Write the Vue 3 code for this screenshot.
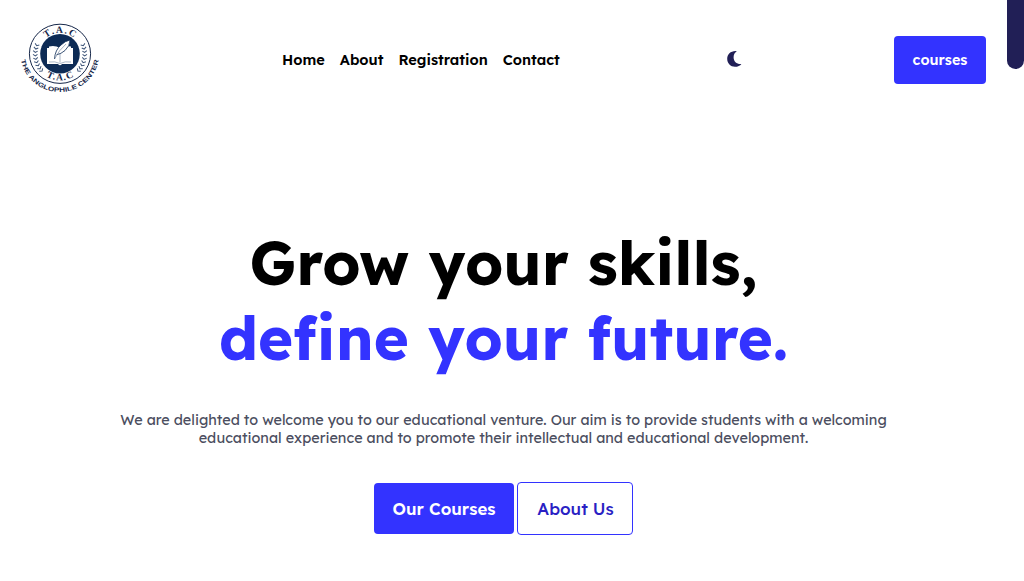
<script setup>
const links = ['Home', 'About', 'Registration', 'Contact']
const leaves = [-20, -12, -4, 4, 12, 20, 28, 36, 43]
</script>

<template>
  <div class="page">
    <header class="bar">
      <svg class="logo" viewBox="0 0 84 84" width="84" height="84">
        <defs>
          <path id="ring-text" d="M2.7 40 A39.2 38 0 0 0 81.1 40" />
          <path id="top-text" d="M20.8 40 A21.2 21.2 0 0 1 63.2 40" />
          <path id="low-text" d="M15 39.4 A27 27 0 0 0 69 39.4" />
        </defs>
        <ellipse cx="42" cy="39.8" rx="30.6" ry="29.6" fill="#fff" stroke="#17284a" stroke-width="1" />
        <circle cx="42" cy="39.8" r="19.8" fill="#0d2b55" />
        <text class="tac"><textPath href="#top-text" startOffset="50%" text-anchor="middle" textLength="30">T.A.C</textPath></text>
        <text class="tac"><textPath href="#low-text" startOffset="50%" text-anchor="middle" textLength="29">T.A.C</textPath></text>
        <g fill="none" stroke="#3d5478" stroke-width="1">
          <path v-for="a in leaves" :key="'l' + a" :transform="`rotate(${-a} 42 40)`" d="M15 38.5 l2.3 1.7 l2.2 -1.5" />
          <path v-for="a in leaves" :key="'r' + a" :transform="`rotate(${a} 42 40)`" d="M69 38.5 l-2.3 1.7 l-2.2 -1.5" />
        </g>
        <path d="M29 34 H31 V32.5 Q37 31 42 34 Q47 31 53 32.5 V34 H55 V50 H44 Q42 52.5 40 50 H29 Z" fill="#fff" />
        <path d="M42 35 V48.5 M31 48 Q37 47 42 49.5 Q47 47 53 48" fill="none" stroke="#7185a0" stroke-width=".6" />
        <path d="M36.5 45 Q37 36 43 31 Q47 27 52 26 Q52 32 47 36.5 Q43 40 38.5 40.8" fill="#fff" stroke="#0d2b55" stroke-width=".8" />
        <path d="M36.5 45 Q41 36 48 30" fill="none" stroke="#4a6080" stroke-width=".5" />
        <text class="name"><textPath href="#ring-text" startOffset="50%" text-anchor="middle" textLength="109" lengthAdjust="spacingAndGlyphs">THE ANGLOPHILE CENTER</textPath></text>
      </svg>
      <nav class="nav">
        <a v-for="l in links" :key="l">{{ l }}</a>
      </nav>
      <svg class="moon" viewBox="0 0 16 18" width="16" height="18">
        <path d="M9.5 .9 C4.4 .9 1.2 4.5 1.2 8.8 C1.2 13.3 4.6 16.8 9 16.8 C11.7 16.8 14.2 15.9 15.4 14 C10.8 14.4 7.6 11.6 7.6 7.2 C7.6 4.8 8.6 2.6 10.8 1.2 Z" fill="#211f56" />
      </svg>
      <button class="btn small">courses</button>
    </header>

    <main class="hero">
      <h1>Grow your skills,<br><span class="blue">define your future.</span></h1>
      <p>We are delighted to welcome you to our educational venture. Our aim is to provide students with a welcoming<br>educational experience and to promote their intellectual and educational development.</p>
      <div class="actions">
        <button class="btn large">Our Courses</button>
        <button class="btn outline">About Us</button>
      </div>
    </main>
    <div class="thumb"></div>
  </div>
</template>

<style>
html, body { overflow: hidden; background: #fff; }
</style>
<style scoped>
.page {
  position: relative;
  width: 1024px;
  height: 581px;
  padding-right: 17px;
  box-sizing: border-box;
  overflow: hidden;
  background: #fff;
  font-family: Lexend, Inter, sans-serif;
}
.bar { display: flex; align-items: center; height: 120px; padding: 0 21px 0 18px; }
.logo { margin-top: -8px; flex: none; }
.tac { font: bold 9.6px "Liberation Serif", serif; fill: #17284a; }
.name { font: bold 6.3px "Liberation Sans", sans-serif; fill: #17284a; }
.nav { display: flex; gap: 15px; width: 279px; margin-left: 180px; margin-top: -2px; font-size: 14.56px; font-weight: 600; color: #000; white-space: nowrap; }
.moon { margin-left: 165px; margin-top: -2px; flex: none; }
.btn { border: 0; border-radius: 4px; background: #3333ff; color: #fff; font-family: inherit; font-weight: 600; padding: 0; white-space: nowrap; }
.small { margin-left: auto; width: 92px; height: 48px; font-size: 14.4px; }
.hero { display: flex; flex-direction: column; align-items: center; padding-top: 105px; }
h1 { margin: 0; font-size: 59.85px; line-height: 75px; font-weight: 700; color: #000; text-align: center; white-space: nowrap; }
.blue { color: #3333ff; }
p { margin: 36px 0 0; font-size: 14.4px; line-height: 18px; font-weight: 400; color: #4b4e60; text-align: center; white-space: nowrap; }
.actions { display: flex; align-items: center; gap: 3px; margin-top: 35px; }
.large { width: 140px; height: 51px; font-size: 16.8px; }
.outline { width: 116px; height: 53px; padding-left: 1px; box-sizing: border-box; border: 1px solid #3333ff; background: #fff; color: #2a1fc4; font-size: 17px; font-weight: 500; }
.thumb { position: absolute; top: -20px; right: 0; width: 17px; height: 89px; border-radius: 9px; background: #211f56; }
</style>
